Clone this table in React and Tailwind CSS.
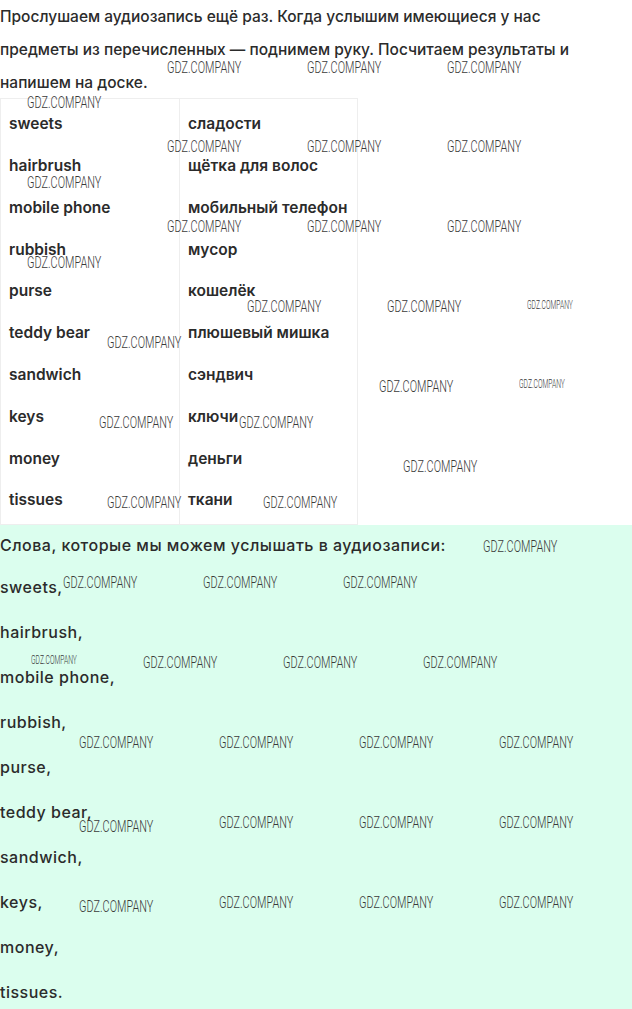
import React from "react";

const rows = [
  ["sweets", "сладости"],
  ["hairbrush", "щётка для волос"],
  ["mobile phone", "мобильный телефон"],
  ["rubbish", "мусор"],
  ["purse", "кошелёк"],
  ["teddy bear", "плюшевый мишка"],
  ["sandwich", "сэндвич"],
  ["keys", "ключи"],
  ["money", "деньги"],
  ["tissues", "ткани"],
];

const words = [
  "sweets,",
  "hairbrush,",
  "mobile phone,",
  "rubbish,",
  "purse,",
  "teddy bear,",
  "sandwich,",
  "keys,",
  "money,",
  "tissues.",
];

// watermark spots: [left, centerY, small]
const marks = [
  [167, 67], [307, 67], [447, 67],
  [27, 102],
  [167, 146], [307, 146], [447, 146],
  [27, 182],
  [167, 226], [307, 226], [447, 226],
  [27, 262],
  [247, 306], [387, 306], [527, 305, true],
  [107, 342],
  [379, 386], [519, 384, true],
  [99, 422], [239, 422],
  [403, 466],
  [107, 502], [263, 502],
  [483, 546],
  [63, 582], [203, 582], [343, 582],
  [31, 660, true], [143, 662], [283, 662], [423, 662],
  [79, 742], [219, 742], [359, 742], [499, 742],
  [79, 826], [219, 822], [359, 822], [499, 822],
  [79, 906], [219, 902], [359, 902], [499, 902],
];

function Mark({ x, y, small }) {
  return (
    <span
      className={
        small
          ? "absolute whitespace-nowrap origin-left scale-x-[0.56] font-['Roboto',sans-serif] font-light text-[12px] leading-[12px] text-[#3a3a3a]"
          : "absolute whitespace-nowrap origin-left scale-x-[0.64] font-['Roboto',sans-serif] font-light text-[17px] leading-[18px] text-[#3a3a3a]"
      }
      style={{ left: x, top: y - (small ? 6 : 9) }}
    >
      GDZ.COMPANY
    </span>
  );
}

export default function App() {
  return (
    <div className="relative w-[632px] h-[1009px] overflow-hidden bg-white font-['Inter',sans-serif] text-[#2b2b2b]">
      {/* Intro */}
      <p className="text-[15.5px] leading-[33px] font-medium whitespace-nowrap">
        Прослушаем аудиозапись ещё раз. Когда услышим имеющиеся у нас
        <br />
        предметы из перечисленных — поднимем руку. Посчитаем результаты и
        <br />
        напишем на доске.
      </p>

      {/* Table */}
      <div className="grid grid-cols-[179px_179px] w-[358px] border border-[#eeeeee] mt-[-1px]">
        <div className="flex flex-col pt-[4px] pb-[3px] border-r border-[#eeeeee]">
          {rows.map((r) => (
            <div key={r[0]} className="h-[41.8px] flex items-center px-2 text-[15.5px] font-semibold">
              {r[0]}
            </div>
          ))}
        </div>
        <div className="flex flex-col pt-[4px] pb-[3px]">
          {rows.map((r) => (
            <div key={r[1]} className="h-[41.8px] flex items-center px-2 text-[15.5px] font-semibold">
              {r[1]}
            </div>
          ))}
        </div>
      </div>

      {/* Answer */}
      <div className="bg-[#dbfeee] flex flex-col text-[16px] tracking-[0.5px] font-medium">
        <div className="h-[40px] flex items-center">
          Слова, которые мы можем услышать в аудиозаписи:
        </div>
        {words.map((w) => (
          <div key={w} className="h-[45px] flex items-center">
            {w}
          </div>
        ))}
      </div>

      {marks.map((m, i) => (
        <Mark key={i} x={m[0]} y={m[1]} small={m[2]} />
      ))}
    </div>
  );
}
